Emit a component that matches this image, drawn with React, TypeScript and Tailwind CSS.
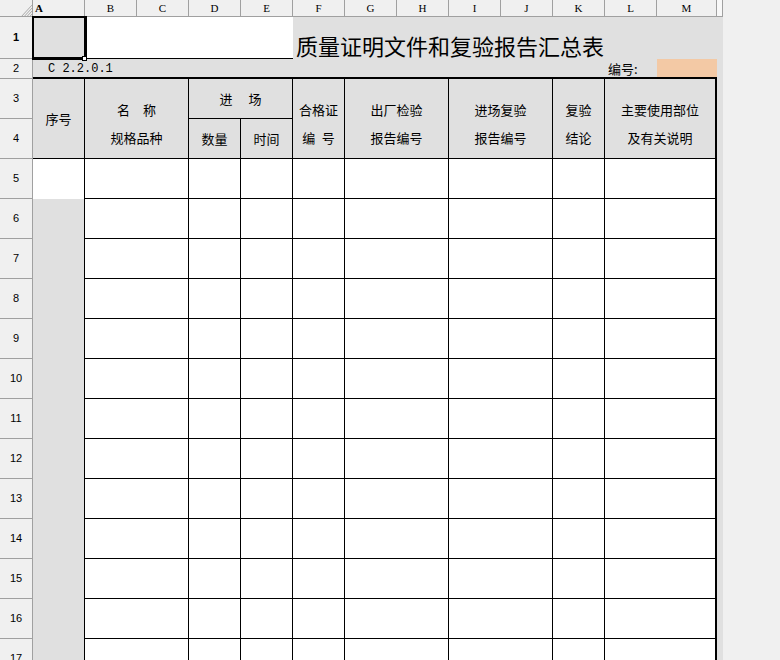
import React from 'react';
import { clsx } from 'clsx';

const cjk = "font-['Noto_Sans_CJK_SC',sans-serif]";
const colLetters = ['B', 'C', 'D', 'E', 'F', 'G', 'H', 'I', 'J', 'K', 'L', 'M'];
const dataRows = Array.from({ length: 13 }, (_, i) => i + 5);

function RowHead({ n, bold }: { n: number; bold?: boolean }) {
    return (
        <div className={clsx(
            "flex items-center justify-center bg-[#f0f0f0] border-r border-b border-[#a0a0a0] text-[11px] text-black font-['Liberation_Sans',sans-serif]",
            bold && "font-bold"
        )}>
            {n}
        </div>
    );
}

// header cell: two lines, or a single centered line
function HeadCell({ lines, className }: { lines: string[]; className?: string }) {
    if (lines.length === 1) {
        return (
            <div className={clsx("flex items-center justify-center bg-[#e0e0e0] border-r border-b border-black text-[13px] text-black whitespace-pre", cjk, className)}>
                {lines[0]}
            </div>
        );
    }
    return (
        <div className={clsx("flex flex-col items-center pt-[17px] bg-[#e0e0e0] border-r border-b border-black text-[13px] leading-[28px] text-black whitespace-pre", cjk, className)}>
            {lines.map((l) => <span key={l}>{l}</span>)}
        </div>
    );
}

const Strip = () => <div className="bg-[#e0e0e0]" />;

export default function App() {
    const cell = "bg-white border-r border-b border-black";

    return (
        <div className="w-[780px] h-[660px] overflow-hidden bg-[#f0f0f0]">
            <div className="relative grid w-max grid-cols-[33px_repeat(12,52px)_60px_6px] grid-rows-[17px_42px_20px_40px_40px_repeat(13,40px)]">
                {/* column headers */}
                <div className="relative bg-[#f0f0f0] border-r border-b border-[#a0a0a0]">
                    <svg className="absolute right-0 bottom-0" width="12" height="13" viewBox="0 0 12 13">
                        {[0.15, 0.38, 0.61, 0.84].map((t) => (
                            <line key={t} x1={12 - 12 * t} y1={13} x2={12} y2={13 - 13 * t} stroke="#a8a8a8" strokeWidth="1" />
                        ))}
                    </svg>
                </div>
                <div className="bg-[#f0f0f0] border-r border-b border-[#a0a0a0] pl-[2px] pt-[1px] text-[11px] leading-[15px] font-bold text-black font-['Liberation_Serif',serif]">A</div>
                {colLetters.map((c) => (
                    <div key={c} className="bg-[#f0f0f0] border-r border-b border-[#a0a0a0] text-center pt-[1px] text-[11px] leading-[15px] text-black font-['Liberation_Serif',serif]">
                        {c}
                    </div>
                ))}
                <div className="bg-[#f8f8f8] border-r border-b border-[#a0a0a0]" />

                {/* row 1 */}
                <RowHead n={1} bold />
                <div className="bg-[#e0e0e0] border-b border-black" />
                <div className="col-span-4 bg-white border-b border-black" />
                <div className={clsx("col-span-8 flex items-end pl-[3px] pb-[1px] bg-[#e0e0e0] text-[22px] leading-[26px] text-black whitespace-nowrap", cjk)}>
                    质量证明文件和复验报告汇总表
                </div>
                <Strip />

                {/* row 2 */}
                <RowHead n={2} />
                <div className="col-span-11 flex items-center pl-[15px] pt-[2px] bg-[#e0e0e0] border-b-2 border-black text-[12px] text-black whitespace-pre font-['Liberation_Mono',monospace]">
                    C 2.2.0.1
                </div>
                <div className={clsx("flex items-center pl-[3px] pt-[2px] bg-[#e0e0e0] border-b-2 border-black text-[13px] text-black", cjk)}>
                    编号:
                </div>
                <div className="bg-[#f3c9a5] border-b-2 border-black" />
                <Strip />

                {/* rows 3-4: table header */}
                <RowHead n={3} />
                <HeadCell className="row-span-2" lines={['序号']} />
                <HeadCell className="col-span-2 row-span-2" lines={['名\u3000称', '规格品种']} />
                <HeadCell className="col-span-2" lines={['进\u3000 场']} />
                <HeadCell className="row-span-2" lines={['合格证', '编\u2002号']} />
                <HeadCell className="col-span-2 row-span-2" lines={['出厂检验', '报告编号']} />
                <HeadCell className="col-span-2 row-span-2" lines={['进场复验', '报告编号']} />
                <HeadCell className="row-span-2" lines={['复验', '结论']} />
                <HeadCell className="col-span-2 row-span-2 border-r-2" lines={['主要使用部位', '及有关说明']} />
                <div className="row-span-2 bg-[#e0e0e0]" />
                <RowHead n={4} />
                <HeadCell lines={['数量']} />
                <HeadCell lines={['时间']} />

                {/* data rows */}
                {dataRows.map((r) => (
                    <React.Fragment key={r}>
                        <RowHead n={r} />
                        <div className={clsx("border-r border-black", r === 5 ? "bg-white" : "bg-[#e0e0e0]")} />
                        <div className={clsx("col-span-2", cell)} />
                        <div className={cell} />
                        <div className={cell} />
                        <div className={cell} />
                        <div className={clsx("col-span-2", cell)} />
                        <div className={clsx("col-span-2", cell)} />
                        <div className={cell} />
                        <div className={clsx("col-span-2 border-r-2", cell)} />
                        <Strip />
                    </React.Fragment>
                ))}

                {/* selected cell A1 */}
                <div className="absolute left-[32px] top-[16px] w-[55px] h-[44px] border-l-2 border-t-2 border-r-[3px] border-b-[3px] border-black pointer-events-none" />
                <div className="absolute left-[82px] top-[56px] w-[5px] h-[5px] bg-white border border-black pointer-events-none" />
            </div>
        </div>
    );
}
